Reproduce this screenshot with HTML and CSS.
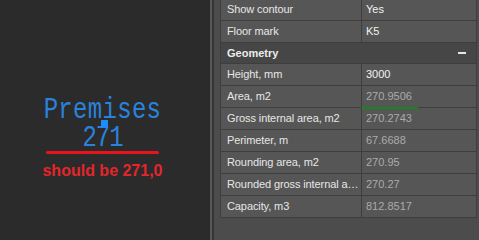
FILE: index.html
```html
<!DOCTYPE html>
<html>
<head>
<meta charset="utf-8">
<link rel="stylesheet" href="styles.css">
</head>
<body>
<div class="app">
  <div class="canvas">
    <div class="mark">
      <div class="mark-text">
        <div class="mline">Premises</div>
        <div class="mline num">271<span class="grip"></span></div>
      </div>
      <div class="redline"></div>
      <div class="note">should be 271,0</div>
    </div>
  </div>
  <div class="divider"></div>
  <div class="panel">
    <div class="props">
      <div class="row"><div class="k">Show contour</div><div class="v edit">Yes</div></div>
      <div class="row"><div class="k">Floor mark</div><div class="v edit">K5</div></div>
      <div class="group"><span class="gname">Geometry</span><span class="minus"></span></div>
      <div class="row"><div class="k">Height, mm</div><div class="v edit">3000</div></div>
      <div class="row"><div class="k">Area, m2</div><div class="v"><span class="hl">270.9506</span></div></div>
      <div class="row"><div class="k">Gross internal area, m2</div><div class="v">270.2743</div></div>
      <div class="row"><div class="k">Perimeter, m</div><div class="v">67.6688</div></div>
      <div class="row"><div class="k">Rounding area, m2</div><div class="v">270.95</div></div>
      <div class="row"><div class="k">Rounded gross internal area, m2</div><div class="v">270.27</div></div>
      <div class="row"><div class="k">Capacity, m3</div><div class="v">812.8517</div></div>
    </div>
  </div>
</div>
</body>
</html>
```
FILE: styles.css
```css
html, body {
  margin: 0;
  padding: 0;
  background: #2b2b2b;
}
.app {
  display: flex;
  width: 479px;
  height: 240px;
  overflow: hidden;
}
.canvas {
  width: 205px;
  padding-right: 5px;
  background: #2b2b2b;
  display: flex;
  justify-content: center;
}
.mark {
  margin-top: 95px;
  display: flex;
  flex-direction: column;
  align-items: center;
}
.mark-text {
  font-family: "Liberation Mono", monospace;
  font-size: 24px;
  line-height: 23.2px;
  color: #2a82dc;
  text-align: center;
  transform: scaleY(1.25);
  transform-origin: top center;
  height: 46.4px;
  letter-spacing: 0.3px;
}
.mline {
  position: relative;
}
.num {
  letter-spacing: -1px;
}
.grip {
  position: absolute;
  left: 50%;
  top: -3px;
  margin-left: -1px;
  width: 7px;
  height: 5.6px;
  background: #1e8cff;
}
.redline {
  margin-top: 10px;
  width: 113px;
  height: 3px;
  border-radius: 2px;
  background: #e8141a;
}
.note {
  margin-top: 8px;
  font-family: "Liberation Sans", Arial, sans-serif;
  font-weight: bold;
  font-size: 16px;
  line-height: 18px;
  color: #e3262b;
}
.divider {
  width: 2px;
  background: #585858;
  border-right: 2px solid #353535;
}
.panel {
  flex: 1;
  background: #4c4c4c;
  padding: 0 2px 0 6px;
}
.props {
  margin-top: -1px;
  border-left: 1px solid #3e3e3e;
  border-right: 1px solid #3e3e3e;
  font-family: "Liberation Sans", Arial, sans-serif;
  font-size: 11px;
}
.row {
  display: grid;
  grid-template-columns: 141px 1fr;
  height: 21px;
  border-bottom: 1px solid #3e3e3e;
  background: #565656;
}
.k {
  padding-left: 6px;
  padding-right: 1px;
  color: #e6e6e6;
  line-height: 21px;
  white-space: nowrap;
  overflow: hidden;
  text-overflow: ellipsis;
  border-right: 1px solid #3e3e3e;
  letter-spacing: -0.1px;
}
.v {
  padding-left: 4px;
  line-height: 21px;
  color: #ababab;
}
.v.edit {
  color: #f2f2f2;
}
.hl {
  display: inline-block;
  vertical-align: top;
  height: 21px;
  line-height: 21px;
  border-bottom: 2px solid #15861d;
  margin-left: -5px;
  padding: 0 6px 0 5px;
}
.group {
  display: flex;
  align-items: center;
  justify-content: space-between;
  height: 20px;
  border-bottom: 1px solid #3e3e3e;
  background: #464646;
  padding: 0 10px 0 6px;
}
.gname {
  font-weight: bold;
  color: #ececec;
}
.minus {
  width: 8px;
  height: 2px;
  background: #e6e6e6;
}
```
